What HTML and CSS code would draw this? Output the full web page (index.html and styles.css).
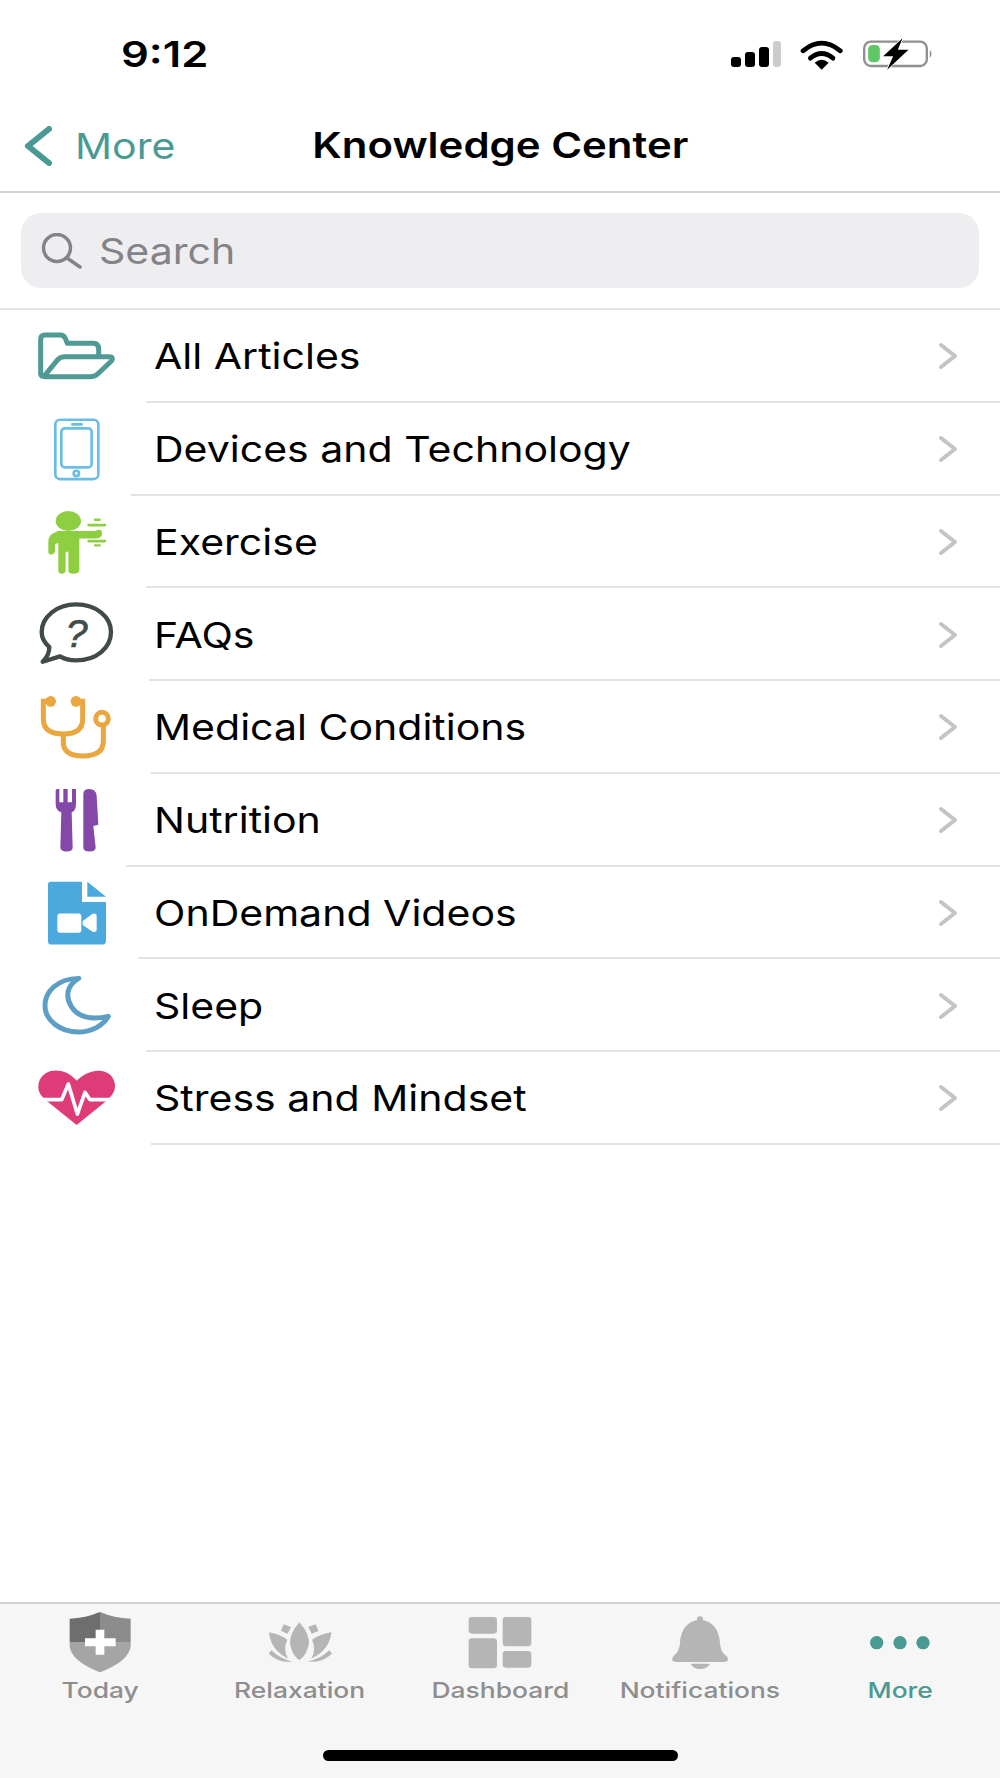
FILE: index.html
```html
<!DOCTYPE html>
<html lang="en">
<head>
<meta charset="utf-8">
<title>Knowledge Center</title>
<link rel="stylesheet" href="styles.css">
</head>
<body>
<div class="screen">
  <header class="status">
    <span class="time">9:12</span>
    <div class="status-icons">
      <svg class="sig" viewBox="0 0 50 26"><rect x="0" y="16" width="10" height="10" rx="3"/><rect x="14" y="11" width="10" height="15" rx="3"/><rect x="28" y="6" width="10" height="20" rx="3"/><rect class="off" x="42" y="0" width="8" height="26" rx="3"/></svg>
      <svg class="wifi" viewBox="300 55 132 92"><path class="wifi-arc" d="M309 90Q365 44 421 90"/><path class="wifi-arc" d="M331 112Q365 84 399 112"/><path d="M344 126Q365 108 386 126L365 147Z"/></svg>
      <svg class="batt" viewBox="485 58 215 90"><rect class="batt-case" x="491" y="66" width="188" height="73" rx="20"/><path class="batt-nub" d="M688 90Q698 102 688 115Z"/><rect class="batt-level" x="503" y="76" width="35" height="52" rx="13"/><path class="batt-bolt" d="M606 56L548 110H578L560 150L624 90H592Z"/></svg>
    </div>
  </header>

  <nav class="nav">
    <div class="back">
      <svg class="back-chev" viewBox="0 0 28 40"><path d="M25 3L4 20L25 37"/></svg>
      <span class="back-label">More</span>
    </div>
    <h1 class="title">Knowledge Center</h1>
    <div></div>
  </nav>

  <div class="search-wrap">
    <div class="search">
      <svg class="search-icon" viewBox="0 0 42 36"><circle cx="16" cy="15" r="13.5"/><path d="M26 25L39 34"/></svg>
      <span class="wide">Search</span>
    </div>
  </div>

  <ul class="list">
    <li class="row sep-146">
      <div class="icon-cell"><svg class="icon" viewBox="114 0 234 278"><path class="folder" d="M122 192V88Q122 75 135 75H180Q192 75 196 85L202 100H280Q296 100 296 118V135M135 195L172 150Q180 140 195 140H328Q342 140 335 152L293 192Q285 200 270 200H135Q122 200 122 188"/></svg></div>
      <div class="row-body"><span class="wide">All Articles</span><svg class="chev" viewBox="0 0 20 28"><path d="M3 3L17 14L3 25"/></svg></div>
    </li>
    <li class="row sep-131">
      <div class="icon-cell"><svg class="icon" viewBox="114 277 234 278"><g class="phone"><rect x="166" y="327" width="129" height="178" rx="14"/><rect x="184" y="353" width="91" height="117" rx="10"/><path d="M217 341H245"/><circle cx="229" cy="488" r="8"/></g></svg></div>
      <div class="row-body"><span class="wide">Devices and Technology</span><svg class="chev" viewBox="0 0 20 28"><path d="M3 3L17 14L3 25"/></svg></div>
    </li>
    <li class="row sep-146">
      <div class="icon-cell"><svg class="icon" viewBox="114 555 234 278"><g class="gym"><ellipse cx="205" cy="630" rx="38" ry="30"/><path d="M145 722V690Q146 668 175 660H285Q305 650 306 665Q308 680 290 682H238V778Q236 788 220 788Q205 788 205 778V722H197V778Q195 788 185 788Q175 788 175 778V695L165 700V722Q160 732 152 730Q145 730 145 722Z"/><path class="gym-bar" d="M266 642H315M266 690H315"/><path class="gym-end" d="M285 626H299M285 703H299"/></g></svg></div>
      <div class="row-body"><span class="wide">Exercise</span><svg class="chev" viewBox="0 0 20 28"><path d="M3 3L17 14L3 25"/></svg></div>
    </li>
    <li class="row sep-149">
      <div class="icon-cell"><svg class="icon" viewBox="114 -7 234 278"><path class="bubble" d="M148 170Q125 150 125 125C125 80 170 42 228 42C290 42 333 80 333 125C333 172 290 210 228 210C210 210 195 207 180 198L128 214Q148 195 148 170Z"/><text class="bubble-q" x="230" y="169">?</text></svg></div>
      <div class="row-body"><span class="wide">FAQs</span><svg class="chev" viewBox="0 0 20 28"><path d="M3 3L17 14L3 25"/></svg></div>
    </li>
    <li class="row sep-151">
      <div class="icon-cell"><svg class="icon" viewBox="114 271 234 278"><g class="steth"><path d="M152 332H130V385Q130 430 190 430Q248 430 248 385V332H228"/><path d="M190 430V455Q190 496 248 496Q310 496 310 452V406"/><circle cx="306" cy="384" r="19"/><circle class="steth-cap" cx="152" cy="332" r="16"/><circle class="steth-cap" cx="228" cy="332" r="16"/></g></svg></div>
      <div class="row-body"><span class="wide">Medical Conditions</span><svg class="chev" viewBox="0 0 20 28"><path d="M3 3L17 14L3 25"/></svg></div>
    </li>
    <li class="row sep-126">
      <div class="icon-cell"><svg class="icon" viewBox="114 550 234 278"><g class="cutlery"><path d="M167 600Q167 595 172 595H178V635H190V595H203V635H216V595H228V640Q228 660 215 665L218 770Q218 782 200 782Q182 782 181 770L184 665Q167 660 167 640Z"/><path d="M250 610Q250 595 268 595Q288 595 290 615L295 702L280 706L287 770Q287 782 268 782Q250 782 250 770Z"/></g></svg></div>
      <div class="row-body"><span class="wide">Nutrition</span><svg class="chev" viewBox="0 0 20 28"><path d="M3 3L17 14L3 25"/></svg></div>
    </li>
    <li class="row sep-138">
      <div class="icon-cell"><svg class="icon" viewBox="114 18 234 278"><path class="video" d="M152 62H246V123H318V240Q318 250 308 250H152Q144 250 144 240V70Q144 62 152 62Z"/><path class="video" d="M262 62L318 107H262Z"/><g class="video-cam"><rect x="172" y="157" width="72" height="58" rx="8"/><path d="M248 180L278 158Q290 155 290 165V205Q290 215 278 212L248 192Z"/></g></svg></div>
      <div class="row-body"><span class="wide">OnDemand Videos</span><svg class="chev" viewBox="0 0 20 28"><path d="M3 3L17 14L3 25"/></svg></div>
    </li>
    <li class="row sep-146">
      <div class="icon-cell"><svg class="icon" viewBox="114 296 234 278"><path class="moon" d="M236 354C170 355 135 395 135 435C135 480 180 515 235 515C275 515 310 495 325 468C270 480 235 470 215 440C195 410 200 375 236 354Z"/></svg></div>
      <div class="row-body"><span class="wide">Sleep</span><svg class="chev" viewBox="0 0 20 28"><path d="M3 3L17 14L3 25"/></svg></div>
    </li>
    <li class="row sep-151">
      <div class="icon-cell"><svg class="icon" viewBox="114 574 234 278"><path class="heart" d="M230 660C205 630 170 625 150 632C125 640 115 660 115 680C115 700 130 712 145 725L230 793L318 722C335 705 345 695 345 675C345 650 325 632 300 630C270 628 245 645 230 660Z"/><path class="heart-ekg" d="M115 717H185L205 670L232 760L255 695L270 717H345"/></svg></div>
      <div class="row-body"><span class="wide">Stress and Mindset</span><svg class="chev" viewBox="0 0 20 28"><path d="M3 3L17 14L3 25"/></svg></div>
    </li>
  </ul>

  <footer class="tabbar">
    <div class="tabs">
      <div class="tab">
        <svg class="tab-icon" viewBox="178 67 240 180"><path class="s1" d="M298 67Q255 85 207 87V157H298Z"/><path class="s2" d="M298 67Q340 85 390 87V157H298Z"/><path class="s3" d="M207 157H390V170Q385 215 298 248Q212 215 207 170Z"/><path class="s4" d="M285 120H311V146H345V170H311V195H285V170H253V146H285Z"/></svg>
        <span>Today</span>
      </div>
      <div class="tab">
        <svg class="tab-icon" viewBox="778 67 240 180"><g class="tab-gray"><path d="M896 98Q925 130 925 160Q920 195 896 212Q872 195 868 160Q868 130 896 98Z"/><path d="M992 128Q988 180 932 207Q948 178 934 150Q955 135 992 128Z"/><path d="M805 128Q809 180 862 207Q846 178 860 150Q840 135 805 128Z"/><path d="M923 112L945 104L953 124L933 132Z"/><path d="M871 112L849 104L841 124L861 132Z"/><path d="M986 182L994 192Q965 220 920 216Q960 208 986 182Z"/><path d="M812 182L804 192Q833 220 876 216Q838 208 812 182Z"/></g></svg>
        <span>Relaxation</span>
      </div>
      <div class="tab">
        <svg class="tab-icon" viewBox="1374 67 240 180"><g class="tab-gray"><rect x="1400" y="82" width="85" height="50" rx="10"/><rect x="1400" y="146" width="85" height="90" rx="10"/><rect x="1502" y="82" width="86" height="88" rx="10"/><rect x="1502" y="184" width="86" height="50" rx="10"/></g></svg>
        <span>Dashboard</span>
      </div>
      <div class="tab">
        <svg class="tab-icon" viewBox="478 67 240 180"><g class="tab-gray"><circle cx="598" cy="89" r="9"/><path d="M598 90C560 92 540 120 538 160C536 180 530 190 518 200Q508 215 525 217H670Q690 215 678 200C665 190 660 180 658 160C656 120 636 92 598 90Z"/><path d="M570 222H628Q620 238 598 238Q578 238 570 222Z"/></g></svg>
        <span>Notifications</span>
      </div>
      <div class="tab tab-active">
        <svg class="tab-icon" viewBox="1080 67 240 180"><circle cx="1130" cy="159" r="20"/><circle cx="1200" cy="159" r="20"/><circle cx="1269" cy="159" r="20"/></svg>
        <span>More</span>
      </div>
    </div>
    <div class="home"></div>
  </footer>
</div>
</body>
</html>
```

FILE: styles.css
```css
* { box-sizing: border-box; }
html, body { margin: 0; padding: 0; background: #fff; }
.screen {
  width: 1000px; height: 1778px; display: flex; flex-direction: column;
  font-family: Inter, "Liberation Sans", sans-serif; color: #000; background: #fff; overflow: hidden;
}

/* The reference is stretched horizontally: text keeps its height and widens */
.wide { display: inline-block; transform: scaleX(1.14); transform-origin: left center; }

/* status bar */
.status { height: 98px; padding: 10px 0 0 121px; display: flex; align-items: center; justify-content: space-between; }
.time { font-size: 36px; font-weight: 600; line-height: 1; transform: scaleX(1.21); transform-origin: left center; }
.status-icons { display: flex; align-items: center; padding-right: 66px; }
.sig { width: 50px; height: 26px; margin-right: 19px; }
.sig .off { fill: #cccccc; }
.wifi { width: 44px; height: 31px; margin-right: 18px; }
.wifi-arc { fill: none; stroke: #000; stroke-width: 14; stroke-linecap: round; }
.batt { width: 72px; height: 30px; overflow: visible; }
.batt-case { fill: none; stroke: #8f8f8f; stroke-width: 7; }
.batt-nub { fill: #8f8f8f; }
.batt-level { fill: #5fc765; }
.batt-bolt { fill: #000; stroke: #fff; stroke-width: 5; paint-order: stroke; }

/* nav bar */
.nav { height: 95px; padding-top: 2px; border-bottom: 2px solid #d4d4d4; display: grid; grid-template-columns: 1fr auto 1fr; align-items: center; padding-left: 24px; padding-right: 24px; }
.back { display: flex; align-items: center; gap: 23px; color: #4a9a94; font-size: 36px; }
.back-label { display: inline-block; transform: scaleX(1.14); transform-origin: left center; }
.back-chev { width: 28px; height: 40px; }
.back-chev path { fill: none; stroke: #4a9a94; stroke-width: 6; stroke-linecap: round; stroke-linejoin: round; }
.title { margin: 0; font-size: 36px; font-weight: 600; line-height: 1.2; transform: scaleX(1.165); }

/* search */
.search-wrap { padding: 20px 21px 20px; border-bottom: 2px solid #e2e2e2; }
.search { height: 75px; border-radius: 20px; background: #eeeef0; display: flex; align-items: center; padding-left: 20px; gap: 16px; color: #838388; font-size: 36px; }
.search-icon { width: 42px; height: 36px; }
.search-icon circle, .search-icon path { fill: none; stroke: #838388; stroke-width: 3.5; stroke-linecap: round; }

/* list */
.list { list-style: none; margin: 0; padding: 0; flex: 1; }
.row { height: 92.75px; display: flex; }
.sep-126 { --sep: 126px; }
.sep-131 { --sep: 131px; }
.sep-138 { --sep: 138px; }
.sep-146 { --sep: 146px; }
.sep-149 { --sep: 149px; }
.sep-151 { --sep: 151px; }
.icon-cell { width: var(--sep); flex: none; padding-left: 38px; }
.icon { display: block; width: 78px; height: 92.75px; overflow: visible; }
.row-body {
  flex: 1; display: flex; align-items: center; justify-content: space-between;
  padding-left: calc(154px - var(--sep)); padding-right: 42px; padding-top: 2px;
  border-bottom: 2px solid #e2e2e2; font-size: 36px; line-height: 1;
}
.chev { width: 20px; height: 28px; }
.chev path { fill: none; stroke: #c4c4c6; stroke-width: 4; stroke-linecap: round; stroke-linejoin: round; }

/* list icons */
.folder { fill: none; stroke: #4f9a94; stroke-width: 15; stroke-linejoin: round; stroke-linecap: round; }
.phone rect, .phone path, .phone circle { fill: none; stroke: #6cbde4; stroke-width: 8; stroke-linecap: round; }
.gym { fill: #8ecf42; }
.gym-bar { fill: none; stroke: #8ecf42; stroke-width: 8; stroke-linecap: round; }
.gym-end { fill: none; stroke: #8ecf42; stroke-width: 7; stroke-linecap: round; }
.bubble { fill: none; stroke: #414b4a; stroke-width: 13; stroke-linejoin: round; }
.bubble-q { fill: #414b4a; stroke: #414b4a; stroke-width: 2; font-family: "Liberation Sans", sans-serif; font-style: italic; font-weight: 400; font-size: 118px; text-anchor: middle; }
.steth path { fill: none; stroke: #eaa63f; stroke-width: 15; }
.steth circle { fill: none; stroke: #eaa63f; stroke-width: 15; }
.steth circle.steth-cap { fill: #eaa63f; stroke: none; }
.cutlery { fill: #8449a8; }
.video { fill: #4ca9de; }
.video-cam { fill: #fff; }
.moon { fill: none; stroke: #5d9fc4; stroke-width: 15; stroke-linejoin: round; }
.heart { fill: #de3c78; }
.heart-ekg { fill: none; stroke: #fff; stroke-width: 11; stroke-linejoin: round; }

/* tab bar */
.tabbar { height: 176px; background: #f6f6f6; border-top: 2px solid #d2d2d2; display: flex; flex-direction: column; align-items: center; flex: none; }
.tabs { width: 100%; display: grid; grid-template-columns: repeat(5, 1fr); padding-top: 8px; }
.tab { display: flex; flex-direction: column; align-items: center; font-size: 22px; font-weight: 500; line-height: 26px; color: #8e8e8e; }
.tab span { margin-top: 5px; transform: scaleX(1.2); }
.tab-icon { display: block; width: 80px; height: 60px; }
.tab-gray { fill: #b5b5b5; }
.tab-active { color: #4a9a94; }
.tab-active .tab-icon { fill: #4a9a94; }
.s1 { fill: #6e6e6e; }
.s2 { fill: #8c8c8c; }
.s3 { fill: #a5a5a5; }
.s4 { fill: #fff; }
.home { width: 355px; height: 11px; border-radius: 6px; background: #000; margin-top: 47px; }
```
